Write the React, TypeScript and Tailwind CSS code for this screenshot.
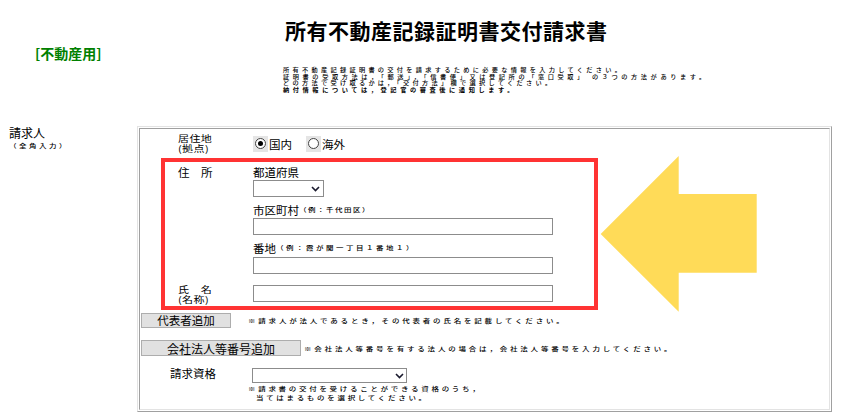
import { ReactNode } from 'react';

const Note = ({ children, className = 'tracking-[2.8px]' }: { children: ReactNode; className?: string }) => (
	<span className={`inline-block origin-center scale-y-[0.8] whitespace-nowrap text-[7.5px] font-medium ${className}`}>{children}</span>
);

const Chevron = () => (
	<svg className="h-[6px] w-[9px]" viewBox="0 0 9 6">
		<path d="M1 1 L4.5 4.5 L8 1" fill="none" stroke="#1a1a2e" strokeWidth="1.6" />
	</svg>
);

const Radio = ({ label, checked, className = '' }: { label: string; checked?: boolean; className?: string }) => (
	<div className={`flex items-center ${className}`}>
		<div className="flex h-[16px] w-[15px] items-center justify-center bg-[#e5e5e5]">
			<div className="flex h-[11px] w-[11px] items-center justify-center rounded-full border border-[#444] bg-white">
				{checked && <div className="h-[5px] w-[5px] rounded-full bg-black" />}
			</div>
		</div>
		<span className="ml-px text-[11.5px] leading-[14px]">{label}</span>
	</div>
);

const App = () => {
	return (
		<div className="relative h-[417px] w-[844px] overflow-hidden bg-white font-['Noto_Sans_CJK_JP',sans-serif] text-black">
			{/* header */}
			<div className="h-[126px]">
				<div className="pl-[285px] pt-[18px] text-[21px] font-bold leading-[24px] tracking-[0.5px]">所有不動産記録証明書交付請求書</div>
				<div className="flex">
					<div className="w-[283px] pl-[35px] pt-[4px] text-[14px] font-bold leading-[15px] text-[#008000]">[不動産用]</div>
					<div className="mt-[25px] whitespace-nowrap text-[6.2px] font-medium leading-[6.5px] tracking-[3.3px]">
						<p>所有不動産記録証明書の交付を請求するために必要な情報を入力してください。</p>
						<p className="tracking-[3.6px]">証明書の受取方法は，「郵送」，「信書便」又は登記所の「窓口受取」 の３つの方法があります。</p>
						<p>どの方法で受け取るかは，「交付方法」欄で選択してください。</p>
						<p className="font-bold tracking-[3.6px]">納付情報については，登記官の審査後に通知します。</p>
					</div>
				</div>
			</div>

			{/* main */}
			<div className="flex">
				<div className="w-[137px] pl-[9px] pt-px">
					<div className="text-[12px] leading-[12px]">請求人</div>
					<div className="leading-[7px]">
						<Note className="tracking-[2.5px]">（全角入力）</Note>
					</div>
				</div>

				<div className="h-[286px] w-[695px] border border-t-[#e3e3e3] border-r-[#a0a0a0] border-b-[#a0a0a0] border-l-[#e3e3e3] p-px">
					<div className="h-full border border-t-[#a0a0a0] border-r-[#e3e3e3] border-b-[#e3e3e3] border-l-[#a0a0a0]">
						<div className="flex h-[29px] items-center">
							<div className="w-[113px] pl-[38px]">
								<div className="origin-center scale-y-[0.8] text-[11px] leading-[11.5px] tracking-[0.4px]">
									居住地
									<br />
									(拠点)
								</div>
							</div>
							<Radio checked label="国内" />
							<Radio label="海外" className="ml-[14px]" />
						</div>

						<div className="ml-[21px] w-[437px] border-4 border-[#ff3333] pt-[3px] pb-[4px] pl-[13px]">
							<div className="flex">
								<div className="w-[75px] text-[11.5px] leading-[14px]">住　所</div>
								<div className="flex flex-col">
									<div className="text-[11.5px] leading-[14px]">都道府県</div>
									<div className="mt-px flex h-[17px] w-[71px] items-center justify-end border border-[#8c8c8c] bg-white pr-[3px]">
										<Chevron />
									</div>
									<div className="mt-[6px] flex h-[14px] items-center">
										<span className="text-[11.5px] leading-[14px]">市区町村</span>
										<Note className="tracking-[1.5px]">（例：千代田区）</Note>
									</div>
									<input className="mt-px h-[17px] w-[300px] border border-[#8c8c8c] bg-white" />
									<div className="mt-[6px] flex h-[14px] items-center">
										<span className="text-[11.5px] leading-[14px]">番地</span>
										<Note className="tracking-[2.5px]">（例：霞が関一丁目１番地１）</Note>
									</div>
									<input className="mt-[2px] h-[17px] w-[300px] border border-[#8c8c8c] bg-white" />
								</div>
							</div>
							<div className="mt-[11px] flex h-[17px] items-center">
								<div className="w-[75px]">
									<div className="origin-center scale-y-[0.8] text-[11px] leading-[12px] tracking-[0.4px]">
										氏　名
										<br />
										(名称)
									</div>
								</div>
								<input className="h-[17px] w-[300px] border border-[#8c8c8c] bg-white" />
							</div>
						</div>

						<div className="mt-[3px] flex items-center leading-[9px]">
							<button type="button" className="ml-px flex h-[15px] w-[90px] items-center justify-center border border-[#adadad] bg-[#e1e1e1] text-[11.5px] leading-[13px]">
								代表者追加
							</button>
							<Note className="ml-[17px] tracking-[2.8px]">※請求人が法人であるとき，その代表者の氏名を記載してください。</Note>
						</div>

						<div className="mt-[12px] flex items-center leading-[9px]">
							<button type="button" className="ml-px flex h-[16px] w-[160px] items-center justify-center border border-[#adadad] bg-[#e1e1e1] text-[12px] leading-[13px]">
								会社法人等番号追加
							</button>
							<Note className="ml-[3px] tracking-[2.8px]">※会社法人等番号を有する法人の場合は，会社法人等番号を入力してください。</Note>
						</div>

						<div className="mt-[12px] flex items-start">
							<div className="w-[112px] pl-[30px] text-[11.5px] leading-[11px]">請求資格</div>
							<div className="flex flex-col">
								<div className="flex h-[15px] w-[155px] items-center justify-end border border-[#8c8c8c] bg-white pr-[2px]">
									<Chevron />
								</div>
								<div className="mt-[1px] flex flex-col items-start leading-[9px]">
									<Note className="-ml-[4px] tracking-[2.7px]">※請求書の交付を受けることができる資格のうち，</Note>
									<Note className="ml-[4px] tracking-[2.7px]">当てはまるものを選択してください。</Note>
								</div>
							</div>
						</div>
					</div>
				</div>
			</div>

			{/* arrow annotation */}
			<svg className="absolute top-[155px] left-[600px] h-[158px] w-[158px]" viewBox="0 0 158 158">
				<polygon points="0.7,79 78.7,1 78.7,39 156.7,39 156.7,117.7 78.7,117.7 78.7,156.7" fill="#ffdb58" />
			</svg>
		</div>
	);
};

export default App;
